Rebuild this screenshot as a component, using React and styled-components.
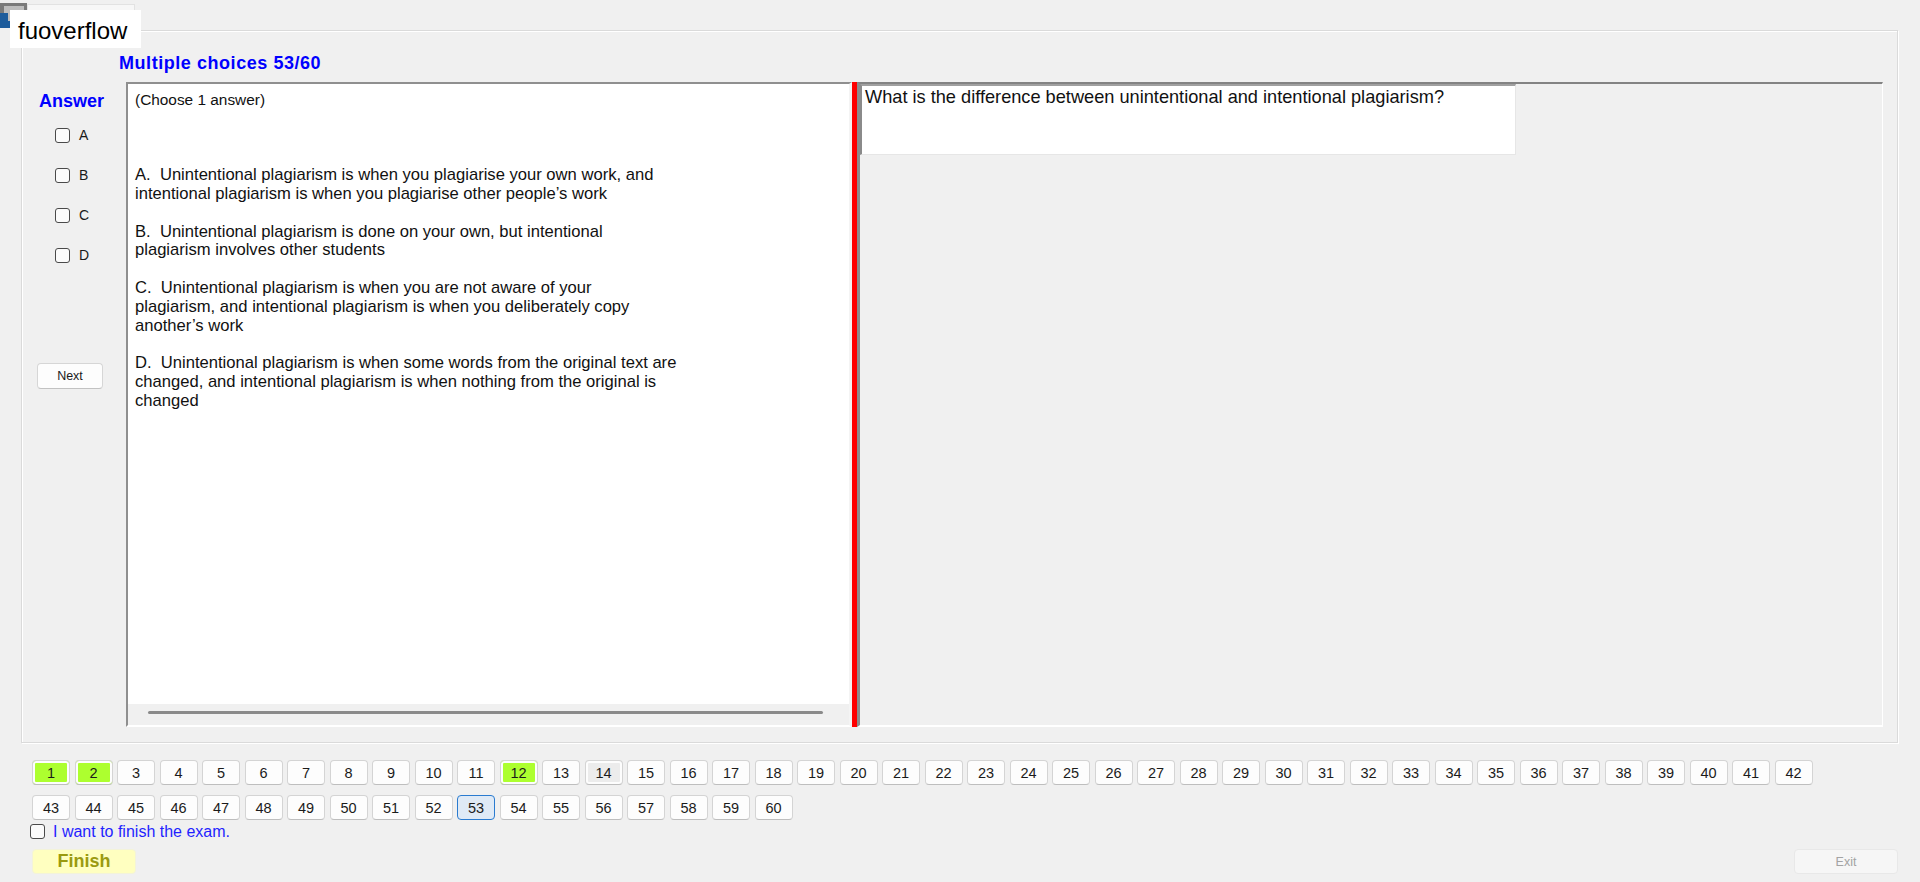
import React from 'react';
import styled, { createGlobalStyle } from 'styled-components';

const GlobalStyle = createGlobalStyle`
  html, body { margin: 0; padding: 0; background: #f0f0f0; }
  body { font-family: "Liberation Sans", Arial, sans-serif; color: #000; }
  * { box-sizing: border-box; }
`;

const Window = styled.div`
  position: relative;
  width: 1920px;
  height: 882px;
  overflow: hidden;
  background: #f0f0f0;
`;

const TitleStrip = styled.div`
  height: 30px;
  display: flex;
  align-items: flex-start;
  padding-top: 3px;
`;

const Tab = styled.div`
  width: 108px;
  height: 8px;
  margin-top: 1px;
  background: #f7f7f7;
  border: 1px solid #e2e2e2;
  border-bottom: none;
`;

const Watermark = styled.div`
  position: absolute;
  left: 10px;
  top: 10px;
  width: 131px;
  height: 38px;
  background: #fff;
  padding: 4px 0 0 8px;
  font-family: "Liberation Sans", Arial, sans-serif;
  font-size: 24px;
  line-height: 34px;
  color: #000;
`;

const GroupBox = styled.section`
  margin-left: 21px;
  width: 1877px;
  height: 713px;
  border: 1px solid #dadada;
  box-shadow: inset 1px 1px 0 #fff, 1px 1px 0 #fff;
  display: flex;
  flex-direction: column;
`;

const Heading = styled.h1`
  margin: 0;
  height: 51px;
  padding: 22px 0 0 97px;
  font-size: 18px;
  line-height: 21px;
  font-weight: bold;
  letter-spacing: 0.55px;
  color: #0000ff;
`;

const ContentRow = styled.div`
  display: flex;
  height: 645px;
`;

const AnswerColumn = styled.div`
  width: 104px;
  flex: none;
  display: flex;
  flex-direction: column;
`;

const AnswerLabel = styled.div`
  margin: 9px 0 0 17px;
  font-size: 18px;
  line-height: 21px;
  font-weight: bold;
  color: #0000ff;
`;

const ChoiceList = styled.div`
  margin-top: 3px;
  display: flex;
  flex-direction: column;
`;

const ChoiceRow = styled.label`
  height: 40px;
  display: flex;
  align-items: center;
  gap: 9px;
  padding-left: 33px;
  font-size: 14px;
  color: #1a1a1a;
`;

const Box = styled.span`
  width: 15px;
  height: 15px;
  flex: none;
  border: 1px solid #4a4a4a;
  border-radius: 3px;
  background: #fbfbfb;
`;

const NextButton = styled.button`
  margin: 88px 0 0 15px;
  width: 66px;
  height: 26px;
  padding: 0;
  background: #fdfdfd;
  border: 1px solid #d6d6d6;
  border-bottom-color: #c2c2c2;
  border-radius: 4px;
  font-family: "Liberation Sans", Arial, sans-serif;
  font-size: 12.5px;
  color: #1a1a1a;
`;

const TextPanel = styled.div`
  width: 726px;
  flex: none;
  display: flex;
  flex-direction: column;
  border-top: 2px solid #8f8f8f;
  border-left: 2px solid #8f8f8f;
  border-bottom: 2px solid #fff;
  border-right: 3px solid #f4f4f4;
`;

const TextArea = styled.div`
  flex: 1;
  background: #fff;
  padding: 7px 0 0 7px;
`;

const TextLine = styled.div`
  white-space: pre;
  font-size: ${p => p.$size || 16.6}px;
  line-height: 18.8px;
  min-height: 18.8px;
  color: #111;
`;

const ScrollStrip = styled.div`
  height: 21px;
  background: #f0f0f0;
  padding: 7px 0 0 20px;
`;

const ScrollThumb = styled.div`
  width: 675px;
  height: 3px;
  border-radius: 2px;
  background: #8a8a8a;
`;

const Splitter = styled.div`
  width: 5px;
  flex: none;
  background: #ff0000;
`;

const RightPanel = styled.div`
  width: 1026px;
  flex: none;
  background: #f0f0f0;
  border-top: 2px solid #838383;
  border-left: 3px solid #8c8c8c;
  border-right: 1px solid #fff;
  border-bottom: 2px solid #fff;
`;

const QuestionBox = styled.div`
  width: 656px;
  height: 71px;
  background: #fff;
  border-top: 2px solid #a0a0a0;
  border-left: 2px solid #8a8a8a;
  border-right: 1px solid #e6e6e6;
  border-bottom: 1px solid #e6e6e6;
  padding: 1px 0 0 3px;
  font-size: 18.2px;
  line-height: 21px;
  color: #111;
`;

const NavGrid = styled.div`
  margin: 17px 0 0 32px;
  width: 1790px;
  display: flex;
  flex-wrap: wrap;
  gap: 10px 4.5px;
`;

const NavButton = styled.button`
  width: 38px;
  height: 25px;
  padding: 0;
  border: 1px solid ${p => (p.$variant === 'current' ? '#2a7bd0' : '#d4d4d4')};
  border-bottom-color: ${p => (p.$variant === 'current' ? '#2a7bd0' : '#bebebe')};
  border-radius: 4px;
  background: ${p =>
    p.$variant === 'done' ? '#adff2f' :
    p.$variant === 'seen' ? '#ececec' :
    p.$variant === 'current' ? '#dfeaf6' : '#fdfdfd'};
  box-shadow: ${p =>
    p.$variant === 'done' || p.$variant === 'seen' ? 'inset 0 0 0 2px #fdfdfd' : 'none'};
  font-family: "Liberation Sans", Arial, sans-serif;
  font-size: 14.5px;
  color: #1b1b1b;
`;

const FinishCheck = styled.label`
  margin: 4px 0 0 30px;
  height: 15px;
  display: flex;
  align-items: center;
  gap: 8px;
  font-size: 16px;
  color: #1f1fff;
`;

const BottomRow = styled.div`
  margin-top: 10px;
  display: flex;
  justify-content: space-between;
  padding: 0 22px 0 32px;
`;

const FinishButton = styled.button`
  width: 104px;
  height: 25px;
  padding: 0;
  background: #ffffc0;
  border: 1px solid #f3f3da;
  border-radius: 4px;
  font-family: "Liberation Sans", Arial, sans-serif;
  font-weight: bold;
  font-size: 18px;
  color: #9a9a10;
`;

const ExitButton = styled.button`
  width: 104px;
  height: 25px;
  padding: 0;
  background: #f6f6f6;
  border: 1px solid #e8e8e8;
  border-radius: 4px;
  font-family: "Liberation Sans", Arial, sans-serif;
  font-size: 12.5px;
  color: #a3a3a3;
`;

const AppIcon = () => (
  <svg width="27" height="25" viewBox="0 0 27 25">
    <rect x="0" y="0" width="27" height="25" fill="#7a7a7a" />
    <rect x="4" y="3" width="20" height="18" fill="#bdbdbd" />
    <path d="M0 10h8v8h19v7H0z" fill="#1d5c9c" />
  </svg>
);

const lines = [
  { t: '(Choose 1 answer)', s: 15.4 },
  { t: '' }, { t: '' }, { t: '' },
  { t: 'A.  Unintentional plagiarism is when you plagiarise your own work, and' },
  { t: 'intentional plagiarism is when you plagiarise other people\u2019s work' },
  { t: '' },
  { t: 'B.  Unintentional plagiarism is done on your own, but intentional' },
  { t: 'plagiarism involves other students' },
  { t: '' },
  { t: 'C.  Unintentional plagiarism is when you are not aware of your' },
  { t: 'plagiarism, and intentional plagiarism is when you deliberately copy' },
  { t: 'another\u2019s work' },
  { t: '' },
  { t: 'D.  Unintentional plagiarism is when some words from the original text are' },
  { t: 'changed, and intentional plagiarism is when nothing from the original is' },
  { t: 'changed' },
];

const variantFor = n => {
  if (n === 1 || n === 2 || n === 12) return 'done';
  if (n === 14) return 'seen';
  if (n === 53) return 'current';
  return 'plain';
};

export default function App() {
  const nums = Array.from({ length: 60 }, (_, i) => i + 1);
  return (
    <Window>
      <GlobalStyle />
      <TitleStrip>
        <AppIcon />
        <Tab />
      </TitleStrip>
      <GroupBox>
        <Heading>Multiple choices 53/60</Heading>
        <ContentRow>
          <AnswerColumn>
            <AnswerLabel>Answer</AnswerLabel>
            <ChoiceList>
              {['A', 'B', 'C', 'D'].map(l => (
                <ChoiceRow key={l}>
                  <Box />
                  {l}
                </ChoiceRow>
              ))}
            </ChoiceList>
            <NextButton>Next</NextButton>
          </AnswerColumn>
          <TextPanel>
            <TextArea>
              {lines.map((l, i) => (
                <TextLine key={i} $size={l.s}>{l.t}</TextLine>
              ))}
            </TextArea>
            <ScrollStrip>
              <ScrollThumb />
            </ScrollStrip>
          </TextPanel>
          <Splitter />
          <RightPanel>
            <QuestionBox>What is the difference between unintentional and intentional plagiarism?</QuestionBox>
          </RightPanel>
        </ContentRow>
      </GroupBox>
      <NavGrid>
        {nums.map(n => (
          <NavButton key={n} $variant={variantFor(n)}>{n}</NavButton>
        ))}
      </NavGrid>
      <FinishCheck>
        <Box />
        I want to finish the exam.
      </FinishCheck>
      <BottomRow>
        <FinishButton>Finish</FinishButton>
        <ExitButton disabled>Exit</ExitButton>
      </BottomRow>
      <Watermark>fuoverflow</Watermark>
    </Window>
  );
}
